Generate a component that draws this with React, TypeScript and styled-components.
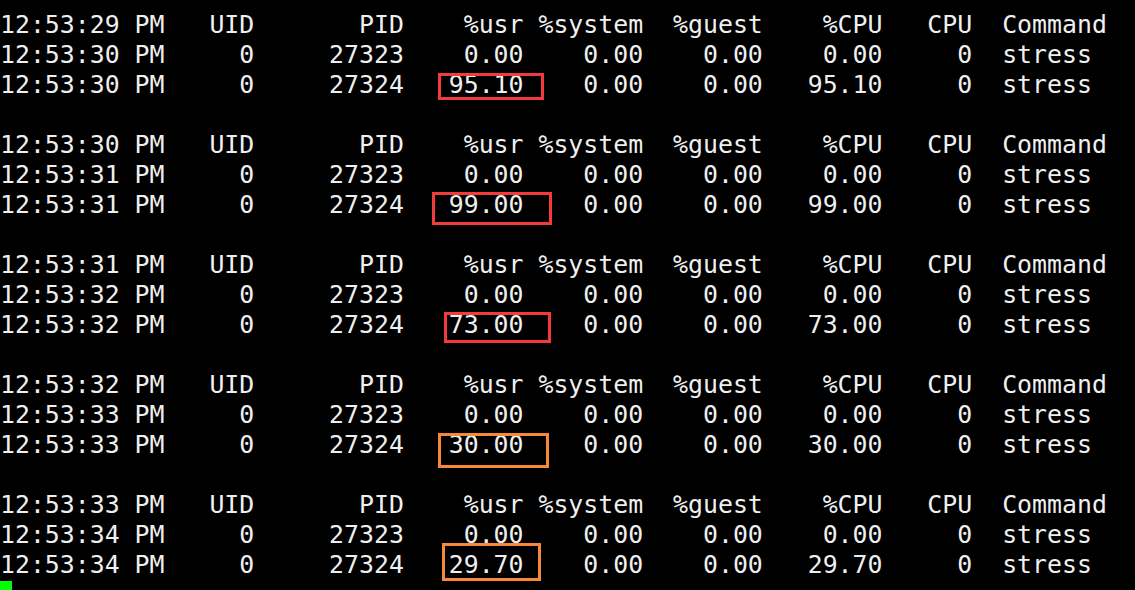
import React from 'react';
import styled, { createGlobalStyle } from 'styled-components';

const GlobalStyle = createGlobalStyle`
  html, body {
    margin: 0;
    padding: 0;
    background: #000;
    overflow: hidden;
  }
`;

const Screen = styled.div`
  position: relative;
  width: 1135px;
  height: 590px;
  background: #000;
  overflow: hidden;
  padding-top: 10px;
  box-sizing: border-box;
`;

const Output = styled.pre`
  margin: 0;
  font-family: 'DejaVu Sans Mono', 'Liberation Mono', monospace;
  font-size: 24.85px;
  line-height: 30px;
  color: #efefef;
  white-space: pre;
`;

const Line = styled.div`
  height: 30px;
`;

const Cursor = styled.span`
  display: inline-block;
  width: 12px;
  height: 30px;
  margin-top: 1px;
  background: #00ff00;
  vertical-align: top;
`;

const Mark = styled.div<{ $x: number; $y: number; $w: number; $h: number; $color: string }>`
  position: absolute;
  left: ${(p) => p.$x}px;
  top: ${(p) => p.$y}px;
  width: ${(p) => p.$w}px;
  height: ${(p) => p.$h}px;
  border: 3px solid ${(p) => p.$color};
  box-sizing: border-box;
  pointer-events: none;
`;

const RED = '#f23b3b';
const ORANGE = '#f7883a';

const header = (t: string) =>
  `${t} PM   UID       PID    %usr %system  %guest    %CPU   CPU  Command`;

const row = (t: string, pid: string, usr: string, cpu: string) =>
  `${t} PM     0     ${pid}${usr.padStart(8)}    0.00    0.00${cpu.padStart(8)}     0  stress`;

const samples = [
  { head: '12:53:29', at: '12:53:30', usr: '95.10' },
  { head: '12:53:30', at: '12:53:31', usr: '99.00' },
  { head: '12:53:31', at: '12:53:32', usr: '73.00' },
  { head: '12:53:32', at: '12:53:33', usr: '30.00' },
  { head: '12:53:33', at: '12:53:34', usr: '29.70' },
];

const marks = [
  { x: 438, y: 73, w: 106, h: 27, color: RED },
  { x: 432, y: 192, w: 120, h: 33, color: RED },
  { x: 444, y: 312, w: 107, h: 31, color: RED },
  { x: 438, y: 433, w: 111, h: 35, color: ORANGE },
  { x: 442, y: 543, w: 99, h: 38, color: ORANGE },
];

const App = () => {
  return (
    <>
      <GlobalStyle />
      <Screen>
        <Output>
          {samples.map((s, idx) => (
            <React.Fragment key={idx}>
              {idx > 0 && <Line />}
              <Line>{header(s.head)}</Line>
              <Line>{row(s.at, '27323', '0.00', '0.00')}</Line>
              <Line>{row(s.at, '27324', s.usr, s.usr)}</Line>
            </React.Fragment>
          ))}
          <Line>
            <Cursor />
          </Line>
        </Output>
        {marks.map((m, idx) => (
          <Mark key={idx} $x={m.x} $y={m.y} $w={m.w} $h={m.h} $color={m.color} />
        ))}
      </Screen>
    </>
  );
};

export default App;
